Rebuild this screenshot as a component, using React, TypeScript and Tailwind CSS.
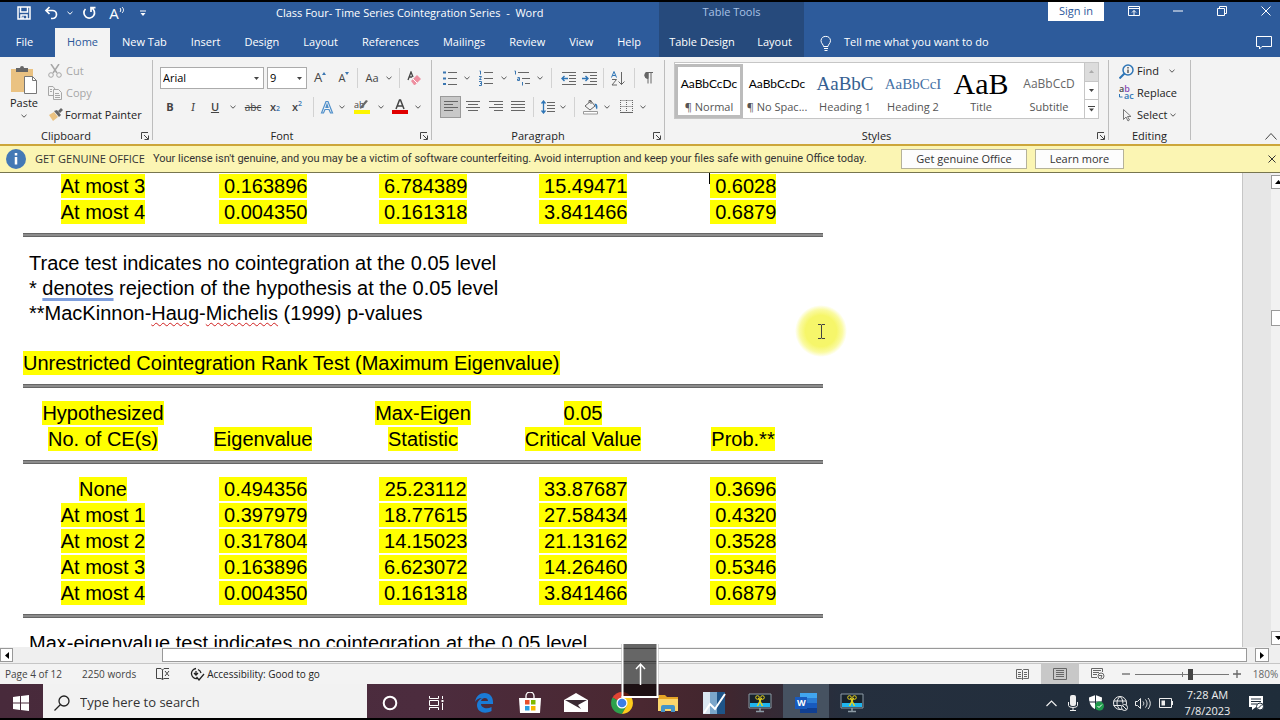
import { FC, ReactNode } from "react";
import clsx from "clsx";

type IconProps = {
  w?: number;
  h?: number;
  className?: string;
  children: ReactNode;
};

const Icon: FC<IconProps> = ({ w = 16, h = 16, className, children }) => (
  <svg
    width={w}
    height={h}
    viewBox={`0 0 ${w} ${h}`}
    fill="none"
    stroke="currentColor"
    className={clsx("shrink-0", className)}
    aria-hidden="true"
  >
    {children}
  </svg>
);

type ToolProps = {
  label: string;
  className?: string;
  children: ReactNode;
};

const Tool: FC<ToolProps> = ({ label, className, children }) => (
  <button
    type="button"
    aria-label={label}
    className={clsx("flex shrink-0 items-center justify-center", className)}
  >
    {children}
  </button>
);

const Chevron = () => (
  <Icon w={6} h={4}>
    <path d="M.5.8 3 3.2 5.5.8" />
  </Icon>
);

const Drop: FC<{ label: string; className: string }> = ({
  label,
  className,
}) => (
  <Tool label={label} className={clsx("h-full text-[#555]", className)}>
    <Chevron />
  </Tool>
);

const Triangle = () => (
  <Icon w={5} h={3}>
    <path d="M0 0h5L2.5 3z" fill="#444" stroke="none" />
  </Icon>
);

const Divider: FC<{ className: string }> = ({ className }) => (
  <div className={clsx("flex h-5 shrink-0 justify-center", className)}>
    <div className="w-px bg-[#d2d2d2]" />
  </div>
);

const tabs = [
  "New Tab",
  "Insert",
  "Design",
  "Layout",
  "References",
  "Mailings",
  "Review",
  "View",
  "Help",
];

const TitleBar = () => (
  <header className="flex h-[55px] shrink-0 bg-[#2d5b9b] text-white">
    <div className="flex w-[659px] shrink-0 flex-col">
      <div className="flex h-[26px] items-center pb-1">
        <Tool label="Save" className="ml-3 w-6">
          <Icon w={14} h={14}>
            <path d="M1 1h12v12H1zM3.5 1v5h7V1M4 13V9h6v4M6 10.500v2" strokeWidth="1.500" />
          </Icon>
        </Tool>
        <Tool label="Undo" className="w-[30px]">
          <Icon w={15} h={14}>
            <path d="M5.500 1 2 4.500 5.500 8M2 4.500h6.500a4 4 0 0 1 0 8H7" strokeWidth="1.700" />
          </Icon>
        </Tool>
        <Tool label="Undo history" className="w-2">
          <Chevron />
        </Tool>
        <Tool label="Redo" className="w-[30px]">
          <Icon w={14} h={14}>
            <path d="M9.500 2A5.300 5.300 0 1 1 3.500 3M9 6V1.700h4.500" strokeWidth="1.700" />
          </Icon>
        </Tool>
        <Tool label="Read aloud" className="w-[26px]">
          <span className="text-[15px] leading-4">A</span>
          <Icon w={6} h={14}>
            <path d="M1 2c1 1 1 3 0 4M3 1c2 2 2 4 0 6" />
          </Icon>
        </Tool>
        <Tool label="Customize toolbar" className="w-[26px]">
          <Icon w={6} h={7}>
            <path d="M0 1h6" />
            <path d="M.5 3h5L3 6z" fill="currentColor" stroke="none" />
          </Icon>
        </Tool>
        <h1 className="ml-[120px] whitespace-pre text-[11px]">
          {"Class Four- Time Series Cointegration Series  -  Word"}
        </h1>
      </div>
      <nav className="flex h-[29px] text-[11px]">
        <button type="button" className="w-[55px] pr-1.5">
          File
        </button>
        <button type="button" className="w-[55px] bg-[#f3f3f3] text-[#2b579a]">
          Home
        </button>
        {tabs.map((tab) => (
          <button key={tab} type="button" className="px-3 whitespace-nowrap">
            {tab}
          </button>
        ))}
      </nav>
    </div>
    <div className="flex w-[145px] shrink-0 flex-col bg-[#264a7c]">
      <div className="flex h-[26px] items-center justify-center pb-1.5 text-[11px] text-[#a9c2e6]">
        Table Tools
      </div>
      <div className="flex h-[29px] text-[11px]">
        <button type="button" className="w-[86px]">
          Table Design
        </button>
        <button type="button" className="flex-1">
          Layout
        </button>
      </div>
    </div>
    <div className="flex min-w-0 flex-1 flex-col">
      <div className="flex h-[26px] items-start justify-end">
        <button
          type="button"
          className="h-[19px] w-14 bg-white text-[11px] text-[#2b579a]"
        >
          Sign in
        </button>
        <Tool label="Ribbon display options" className="ml-2 h-[18px] w-11">
          <Icon w={12} h={10}>
            <path d="M.5.5h11v9H.5zM.5 2.500h11M6 9V4.500M4 6.500l2-2 2 2" />
          </Icon>
        </Tool>
        <Tool label="Minimize" className="h-[18px] w-11">
          <Icon w={10} h={2}>
            <path d="M0 1h10" />
          </Icon>
        </Tool>
        <Tool label="Restore" className="h-[18px] w-[43px]">
          <Icon w={10} h={10}>
            <path d="M.5 2.500h7v7h-7zM2.500 2V.5h7v7H8" />
          </Icon>
        </Tool>
        <Tool label="Close" className="h-[18px] w-[37px] pl-2">
          <Icon w={10} h={10}>
            <path d="m.5.5 9 9m0-9-9 9" />
          </Icon>
        </Tool>
      </div>
      <div className="flex h-[29px] items-center pr-2 pl-4">
        <Icon w={12} h={16}>
          <path d="M3.500 11.500C3.500 9.500 1 8.500 1 5.500a4.800 4.800 0 0 1 9.500 0c0 3-2.500 4-2.500 6zM4 13.500h4M4.500 15.500h3" />
        </Icon>
        <button type="button" className="ml-3 text-[11px]">
          Tell me what you want to do
        </button>
        <Tool label="Comments" className="ml-auto">
          <Icon w={16} h={14}>
            <path d="M.5.500h15v10H6L3.500 13v-2.500h-3z" />
          </Icon>
        </Tool>
      </div>
    </div>
  </header>
);

type GroupProps = {
  label: string;
  className: string;
  launcher?: boolean;
  children: ReactNode;
};

const Group: FC<GroupProps> = ({
  label,
  className,
  launcher = true,
  children,
}) => (
  <>
    <section className={clsx("flex shrink-0 flex-col", className)}>
      {children}
      <div className="mt-auto flex h-4 items-center">
        <span className="flex-1 text-center">{label}</span>
        {launcher && (
          <Tool label={`${label} settings`} className="w-5 pl-1.5">
            <Icon w={8} h={8} className="text-[#444]">
              <path d="M.5 7V.500H7M3 3l4 4M7.500 3.500v4h-4" />
            </Icon>
          </Tool>
        )}
      </div>
    </section>
    <div className="mt-[3px] mb-1 w-px shrink-0 bg-[#bdbdbd]" />
  </>
);

const ClipboardGroup = () => (
  <Group label="Clipboard" className="w-[152px]">
    <div className="flex">
      <button
        type="button"
        className="flex w-12 flex-col items-center pt-2"
      >
        <Icon w={28} h={30}>
          <path d="M1 4h22v23H1z" fill="#eac282" stroke="none" />
          <path d="M6 3h4a2 2 0 0 1 4 0h4v4H6z" fill="#666" stroke="none" />
          <path d="M14.500 11.500h8l4 4v13h-12z" fill="#fff" stroke="#777" />
          <path d="M22.500 11.500v4h4" stroke="#777" />
        </Icon>
        <span>Paste</span>
        <span className="mt-0.5 text-[#555]">
          <Chevron />
        </span>
      </button>
      <div className="flex flex-col pt-[3px]">
        <button
          type="button"
          className="flex h-[22px] items-center gap-1 text-[#a6a6a6]"
        >
          <Icon w={14} h={14}>
            <path d="m3 0 6 9M11 0 5 9" strokeWidth="1.500" />
            <circle cx="3" cy="11" r="2.300" />
            <circle cx="11" cy="11" r="2.300" />
          </Icon>
          Cut
        </button>
        <button
          type="button"
          className="flex h-[22px] items-center gap-1 text-[#a6a6a6]"
        >
          <Icon w={14} h={14}>
            <path d="M5 9.500H.5v-9H5L7 3M2 3.500h2M2 5.500h2M5.500 3.500h5l3 3v7h-8zM7 7.500h4M7 9.500h5M7 11.500h5" />
          </Icon>
          Copy
        </button>
        <button type="button" className="flex h-[22px] items-center gap-0.5">
          <Icon w={15} h={14}>
            <path d="m1 7 5-3 4 5-5 4z" fill="#eac282" stroke="none" />
            <path d="m6 3 3-1 4 5-2 2zM10 3l3-3 2 2-3 3z" fill="#666" stroke="none" />
          </Icon>
          Format Painter
        </button>
      </div>
    </div>
  </Group>
);

const FontGroup = () => (
  <Group label="Font" className="w-[278px]">
    <div className="flex h-8 items-center pt-2.5 pl-[7px] text-[#444]">
      <div className="flex h-[22px] w-[104px] items-center border border-[#ababab] bg-white pr-1">
        <select
          aria-label="Font family"
          className="flex-1 appearance-none pl-0.5 text-black outline-none"
        >
          <option>Arial</option>
        </select>
        <Triangle />
      </div>
      <div className="ml-[3px] flex h-[22px] w-10 items-center border border-[#ababab] bg-white pr-1">
        <select
          aria-label="Font size"
          className="min-w-0 flex-1 appearance-none pl-0.5 text-black outline-none"
        >
          <option>9</option>
        </select>
        <Triangle />
      </div>
      <Tool label="Grow font" className="w-[26px]">
        <span className="text-[13px]">A</span>
        <Icon w={4} h={12}>
          <path d="M0 3h4L2 0z" fill="#3a76b1" stroke="none" />
        </Icon>
      </Tool>
      <Tool label="Shrink font" className="w-[22px]">
        <span>A</span>
        <Icon w={4} h={12}>
          <path d="M0 0h4L2 3z" fill="#3a76b1" stroke="none" />
        </Icon>
      </Tool>
      <Divider className="w-1" />
      <Tool label="Change case" className="w-[22px] pl-1">
        <span>Aa</span>
      </Tool>
      <Drop label="Change case options" className="w-4" />
      <Divider className="w-1" />
      <Tool label="Clear formatting" className="w-[26px]">
        <Icon w={14} h={15}>
          <path d="m1 9 3-8 2 5M2 6h3" strokeWidth="1.300" />
          <path d="m4 10 6-6 4 4-6 6H7z" fill="#ee8fa0" stroke="none" />
          <path d="m6 8 4 4" stroke="#fff" />
        </Icon>
      </Tool>
    </div>
    <div className="mt-[7px] flex h-[22px] items-center pl-[7px] text-[#444]">
      <Tool label="Bold" className="w-5 font-bold">
        B
      </Tool>
      <Tool label="Italic" className="w-[26px] font-serif text-xs italic">
        I
      </Tool>
      <Tool label="Underline" className="w-[18px] font-semibold underline">
        U
      </Tool>
      <Drop label="Underline style" className="w-[18px]" />
      <Tool label="Strikethrough" className="w-[22px] text-[10px] line-through">
        abc
      </Tool>
      <Tool label="Subscript" className="w-[22px] font-semibold">
        x<sub className="text-[7px] text-[#3a76b1]">2</sub>
      </Tool>
      <Tool label="Superscript" className="w-[22px] font-semibold">
        x<sup className="text-[7px] text-[#3a76b1]">2</sup>
      </Tool>
      <Divider className="w-2.5" />
      <Tool label="Text effects" className="w-[18px]">
        <Icon w={14} h={14}>
          <path d="M1.500 13 6 1.500h2L12.500 13h-2L9 9.500H5L3.500 13zM6 7.500h2L7 4.500z" stroke="#4f8fca" strokeWidth="1.200" />
        </Icon>
      </Tool>
      <Drop label="Text effects options" className="w-3" />
      <Tool label="Text highlight color" className="w-7">
        <Icon w={16} h={16}>
          <text x="0" y="9" fontSize="9" fill="#444" stroke="none">
            ab
          </text>
          <path d="m14 2-6 7-2 1 1-3 5-6z" fill="#666" stroke="none" />
          <path d="M0 11h16v4H0z" fill="#fdf500" stroke="none" />
        </Icon>
      </Tool>
      <Drop label="Highlight colors" className="w-2.5" />
      <Tool label="Font color" className="w-7">
        <Icon w={16} h={16}>
          <path d="M4 10 7.500 1h1L12 10M5.500 7h5" strokeWidth="1.500" />
          <path d="M0 11h16v4H0z" fill="#e00000" stroke="none" />
        </Icon>
      </Tool>
      <Drop label="Font colors" className="w-2" />
    </div>
  </Group>
);

const ParagraphGroup = () => (
  <Group label="Paragraph" className="w-[232px]">
    <div className="flex h-8 items-center pt-2.5 pl-1.5 text-[#666]">
      <Tool label="Bullets" className="w-6">
        <Icon w={14} h={14}>
          <path d="M5 1.500h9M5 7.500h9M5 13.500h9" />
          <path d="M0 .5h3v2H0zM0 6.500h3v2H0zM0 12h3v2H0z" fill="#3a76b1" stroke="none" />
        </Icon>
      </Tool>
      <Drop label="Bullet library" className="w-2.5" />
      <Tool label="Numbering" className="w-7">
        <Icon w={14} h={16}>
          <path d="M5 2.500h9M5 8.500h9M5 13.500h9" />
          <path d="M.5 1h1v3.500M0 6.500h2.500L.5 9.500h2M0 11.500h2.500v4H0M1 13.500h1.500" stroke="#3a76b1" />
        </Icon>
      </Tool>
      <Drop label="Numbering library" className="w-2" />
      <Tool label="Multilevel list" className="w-7">
        <Icon w={16} h={16}>
          <path d="M4 2.500h11M8 8.500h8M11 13.500h5" />
          <path d="M.5 1h1v3.500M3.500 7.500h2v3h-2v-1.500h2M8.500 12v3.500" stroke="#3a76b1" />
        </Icon>
      </Tool>
      <Drop label="List library" className="w-2" />
      <Divider className="w-3.5" />
      <Tool label="Decrease indent" className="w-5">
        <Icon w={15} h={13}>
          <path d="M1 .5h14M8 3.500h7M8 6.500h7M8 9.500h7M1 12.500h14" />
          <path d="M7 6.500H1M3.500 4 1 6.500 3.500 9" stroke="#2e75b6" strokeWidth="1.400" />
        </Icon>
      </Tool>
      <Tool label="Increase indent" className="w-[22px]">
        <Icon w={15} h={13}>
          <path d="M1 .5h14M8 3.500h7M8 6.500h7M8 9.500h7M1 12.500h14" />
          <path d="M0 6.500h6M3.500 4 6 6.500 3.500 9" stroke="#2e75b6" strokeWidth="1.400" />
        </Icon>
      </Tool>
      <Divider className="w-1.5" />
      <Tool label="Sort" className="w-6">
        <Icon w={14} h={15}>
          <path d="m.5 6.500 2.500-6 2.500 6M1.500 4.500h3" stroke="#2e75b6" />
          <path d="M1 8.500h4.500l-4.500 5.500h5M10.500 1v12.500M7.500 10.500l3 3 3-3" />
        </Icon>
      </Tool>
      <Divider className="w-2" />
      <Tool label="Show formatting marks" className="w-5">
        <Icon w={10} h={12}>
          <path d="M5 .5v11M8 .5v11M4 .500h6" />
          <path d="M5 0a3 3 0 0 0 0 6.500z" fill="currentColor" />
        </Icon>
      </Tool>
    </div>
    <div className="mt-[7px] flex h-[22px] items-center pl-2 text-[#666]">
      <Tool
        label="Align left"
        className="h-[22px] w-[21px] border border-[#9a9a9a] bg-[#c8c8c8]"
      >
        <Icon w={14} h={12}>
          <path d="M0 .5h14M0 3.500h9M0 6.500h14M0 9.500h9" />
        </Icon>
      </Tool>
      <Tool label="Center" className="w-6">
        <Icon w={14} h={12}>
          <path d="M0 .5h14M2 3.500h10M0 6.500h14M2 9.500h10" />
        </Icon>
      </Tool>
      <Tool label="Align right" className="w-[22px]">
        <Icon w={14} h={12}>
          <path d="M0 .5h14M5 3.500h9M0 6.500h14M5 9.500h9" />
        </Icon>
      </Tool>
      <Tool label="Justify" className="w-[22px]">
        <Icon w={14} h={12}>
          <path d="M0 .5h14M0 3.500h14M0 6.500h14M0 9.500h14" />
        </Icon>
      </Tool>
      <Divider className="w-2" />
      <Tool label="Line spacing" className="w-[22px]">
        <Icon w={14} h={14}>
          <path d="M6 2.500h8M6 5.500h8M6 8.500h8M6 11.500h8" />
          <path d="M2.500 1v12M.5 3.500 2.500 1l2 2.500M.5 10.500l2 2.500 2-2.500" stroke="#2e75b6" strokeWidth="1.300" />
        </Icon>
      </Tool>
      <Drop label="Line spacing options" className="w-2" />
      <Divider className="w-3.5" />
      <Tool label="Shading" className="w-5">
        <Icon w={16} h={16}>
          <path d="m2 7 6-5 4 5-5 4zM6 4V1.500h2V5" />
          <path d="M11.500 4.500c3 0 3.500 3 2.500 6-1.500-1-1-3-2.500-6z" fill="#2e75b6" stroke="none" />
          <path d="M.5 12.500h14v2.500H.5z" fill="#fff" stroke="#999" />
        </Icon>
      </Tool>
      <Drop label="Shading colors" className="w-3" />
      <Tool label="Borders" className="w-[26px]">
        <Icon w={13} h={14}>
          <path d="M.5.5h12M.5 6.500h12M.5 0v12M6.500 0v12M12.500 0v12" strokeDasharray="1 1" />
          <path d="M0 12.500h13" />
        </Icon>
      </Tool>
      <Drop label="Border styles" className="w-2" />
    </div>
  </Group>
);

const wordStyles = [
  {
    name: "¶ Normal",
    sample: "AaBbCcDc",
    font: "font-['Lato',sans-serif] text-xs text-black",
  },
  {
    name: "¶ No Spac...",
    sample: "AaBbCcDc",
    font: "font-['Lato',sans-serif] text-xs text-black",
  },
  {
    name: "Heading 1",
    sample: "AaBbC",
    font: "font-['Liberation_Serif',serif] text-[19px] text-[#365f91]",
  },
  {
    name: "Heading 2",
    sample: "AaBbCcI",
    font: "font-['Liberation_Serif',serif] text-[15px] text-[#4571a5]",
  },
  {
    name: "Title",
    sample: "AaB",
    font: "font-['Liberation_Serif',serif] text-3xl leading-6 text-black",
  },
  {
    name: "Subtitle",
    sample: "AaBbCcD",
    font: "font-['Open_Sans',sans-serif] text-xs text-[#666]",
  },
];

const StylesGroup = () => (
  <Group label="Styles" className="w-[443px]">
    <div className="mt-[5px] ml-[9px] flex h-[57px] w-[425px] border border-[#c6c6c6] bg-white">
      {wordStyles.map(({ name, sample, font }, i) => (
        <button
          key={name}
          type="button"
          className={clsx(
            "mt-px flex h-[54px] w-[68px] shrink-0 flex-col items-center overflow-hidden border-[3px]",
            i === 0 ? "border-[#bcbcbc]" : "border-transparent"
          )}
        >
          <span
            className={clsx(
              "flex h-[30px] w-[58px] items-center justify-center overflow-hidden pt-1 whitespace-nowrap",
              font
            )}
          >
            {sample}
          </span>
          <span className="mt-0.5 whitespace-nowrap text-[#555]">{name}</span>
        </button>
      ))}
      <div className="ml-auto flex w-[14px] flex-col divide-y divide-[#c6c6c6] border-l border-[#c6c6c6]">
        <Tool label="Previous styles" className="flex-1 bg-[#dcdcdc]">
          <Icon w={5} h={3}>
            <path d="M0 3h5L2.500 0z" fill="#aaa" stroke="none" />
          </Icon>
        </Tool>
        <Tool label="Next styles" className="flex-1">
          <Triangle />
        </Tool>
        <Tool label="More styles" className="flex-1">
          <Icon w={7} h={6}>
            <path d="M0 .500h7" stroke="#444" />
            <path d="M1 2.500h5L3.500 5.500z" fill="#444" stroke="none" />
          </Icon>
        </Tool>
      </div>
    </div>
  </Group>
);

const EditingGroup = () => (
  <Group label="Editing" className="w-[81px]" launcher={false}>
    <div className="flex flex-col pt-[3px] pl-2.5">
      <button type="button" className="flex h-[22px] items-center gap-[3px]">
        <Icon w={15} h={15}>
          <circle cx="9" cy="6" r="5" stroke="#2e75b6" strokeWidth="1.500" />
          <path d="m5.500 9.500-5 5" stroke="#2e75b6" strokeWidth="2" />
          <path d="M9 5.500V9M9 3v1.500" stroke="#444" strokeWidth="1.300" />
        </Icon>
        Find
        <span className="ml-[7px] text-[#555]">
          <Chevron />
        </span>
      </button>
      <button type="button" className="flex h-[22px] items-center gap-[3px]">
        <Icon w={15} h={18}>
          <g stroke="none" fontSize="9" fontWeight="600">
            <text x="0" y="8" fill="#444">
              a<tspan fill="#8a4db5">b</tspan>
            </text>
            <text x="5" y="15" fill="#2e75b6">
              ac
            </text>
          </g>
          <path d="M.5 10v3h3" stroke="#2e75b6" />
        </Icon>
        Replace
      </button>
      <button type="button" className="flex h-[22px] items-center gap-[3px]">
        <Icon w={15} h={15}>
          <path d="M4.500 1.500v10l2.500-2.500 2 4 1.500-1-2-3.500h3.500z" stroke="#777" />
        </Icon>
        Select
        <span className="text-[#555]">
          <Chevron />
        </span>
      </button>
    </div>
  </Group>
);

const LicenseBar = () => (
  <div className="flex h-[29px] shrink-0 items-center border-t-2 border-b border-t-[#cca63a] border-b-[#77754f] bg-[#fbf5b3] pr-1 pl-1.5 text-[11px] whitespace-nowrap text-[#333]">
    <Icon w={20} h={20}>
      <circle cx="10" cy="10" r="10" fill="#4479b5" stroke="none" />
      <path d="M10 8v7.500M10 4v2.500" stroke="#fff" strokeWidth="2.500" />
    </Icon>
    <span className="ml-[9px] w-[109px]">GET GENUINE OFFICE</span>
    <span className="ml-[9px] w-[738px] font-['Roboto','Open_Sans',sans-serif]">
      Your license isn't genuine, and you may be a victim of software
      counterfeiting. Avoid interruption and keep your files safe with genuine
      Office today.
    </span>
    <button
      type="button"
      className="ml-2.5 h-5 w-[126px] border border-[#b5b29a] bg-[#fdfdfd]"
    >
      Get genuine Office
    </button>
    <button
      type="button"
      className="ml-2 h-5 w-[89px] border border-[#b5b29a] bg-[#fdfdfd]"
    >
      Learn more
    </button>
    <Tool label="Dismiss message" className="ml-auto">
      <Icon w={8} h={8}>
        <path d="m.5.5 7 7m0-7-7 7" />
      </Icon>
    </Tool>
  </div>
);

const Mark: FC<{ children: ReactNode }> = ({ children }) => (
  <mark className="inline-block bg-[#ffff00] align-top whitespace-pre text-black">
    {children}
  </mark>
);

const Rule: FC<{ className: string }> = ({ className }) => (
  <div
    className={clsx("h-1 border-y border-[#666] bg-[#8c8c8c]", className)}
  />
);

const DataTable: FC<{ label: string; head?: string[][]; rows: string[][] }> = ({
  label,
  head,
  rows,
}) => (
  <table aria-label={label} className="w-full table-fixed text-center leading-6">
    {head && (
      <thead>
        {head.map((cells, i) => (
          <tr key={i}>
            {cells.map((cell, j) => (
              <th key={j} className="px-0 py-px font-normal">
                {cell && <Mark>{cell}</Mark>}
              </th>
            ))}
          </tr>
        ))}
      </thead>
    )}
    <tbody>
      {rows.map((cells) => (
        <tr key={cells[0]}>
          {cells.map((cell, j) => (
            <td key={j} className="px-0 py-px">
              <Mark>{j ? ` ${cell}` : cell}</Mark>
            </td>
          ))}
        </tr>
      ))}
    </tbody>
  </table>
);

const traceRows = [
  ["At most 3", "0.163896", "6.784389", "15.49471", "0.6028"],
  ["At most 4", "0.004350", "0.161318", "3.841466", "0.6879"],
];

const eigenHead = [
  ["Hypothesized", "", "Max-Eigen", "0.05", ""],
  ["No. of CE(s)", "Eigenvalue", "Statistic", "Critical Value", "Prob.**"],
];

const eigenRows = [
  ["None", "0.494356", "25.23112", "33.87687", "0.3696"],
  ["At most 1", "0.397979", "18.77615", "27.58434", "0.4320"],
  ["At most 2", "0.317804", "14.15023", "21.13162", "0.3528"],
  ["At most 3", "0.163896", "6.623072", "14.26460", "0.5346"],
  ["At most 4", "0.004350", "0.161318", "3.841466", "0.6879"],
];

const Document = () => (
  <main className="flex min-h-0 flex-1 overflow-hidden">
    <div className="relative min-w-0 flex-1 overflow-hidden border-r border-[#c6c6c6] bg-white font-['Liberation_Sans',Arial,sans-serif] text-[20px] text-black">
      <article className="ml-[23px] max-w-[800px]">
        <DataTable label="Trace test" rows={traceRows} />
        <Rule className="mt-2" />
        <div className="mt-3.5 pl-1.5 leading-[25px]">
          <p>Trace test indicates no cointegration at the 0.05 level</p>
          <p>
            *{" "}
            <span className="underline decoration-[#7f9fdd] decoration-3 underline-offset-3">
              denotes
            </span>{" "}
            rejection of the hypothesis at the 0.05 level
          </p>
          <p>
            **MacKinnon-
            <span className="underline decoration-[#d02020] decoration-wavy decoration-1 underline-offset-2">
              Haug
            </span>
            -
            <span className="underline decoration-[#d02020] decoration-wavy decoration-1 underline-offset-2">
              Michelis
            </span>{" "}
            (1999) p-values
          </p>
        </div>
        <h2 className="mt-[25px] leading-6">
          <Mark>Unrestricted Cointegration Rank Test (Maximum Eigenvalue)</Mark>
        </h2>
        <Rule className="mt-[9px]" />
        <div className="h-3" />
        <DataTable label="Maximum eigenvalue test" head={eigenHead} rows={[]} />
        <Rule className="mt-2" />
        <div className="h-3" />
        <DataTable label="Maximum eigenvalue results" rows={eigenRows} />
        <Rule className="mt-2" />
        <p className="mt-[13px] pl-1.5 leading-[25px]">
          Max-eigenvalue test indicates no cointegration at the 0.05 level
        </p>
      </article>
      {/* pointer halo */}
      <div className="absolute top-[132px] left-[795px] flex size-[52px] items-center justify-center rounded-full bg-[radial-gradient(closest-side,#f6f66a_60%,#fafaa0_82%,transparent)]">
        <Icon w={7} h={15}>
          <path d="M0 .500h3l.5.5.5-.5h3M3.500 1v13M0 14.500h3l.5-.5.5.5h3" stroke="#444" />
        </Icon>
      </div>
      {/* text caret */}
      <div className="absolute top-0 left-[709px] h-[11px] w-px bg-black" />
    </div>
    <div className="w-7 shrink-0 bg-[#e6e6e6]" />
    <div className="flex w-[9px] shrink-0 flex-col items-start overflow-hidden bg-[#f1f1f1] py-0.5">
      <Tool label="Scroll up" className="h-3.5 w-3.5 border border-[#999] bg-white">
        <Icon w={7} h={4}>
          <path d="M0 4h7L3.500 0z" fill="#000" stroke="none" />
        </Icon>
      </Tool>
      <div className="mt-[121px] h-4 w-3.5 border border-[#999] bg-white" />
      <Tool
        label="Scroll down"
        className="mt-auto h-3.5 w-3.5 border border-[#999] bg-white"
      >
        <Icon w={7} h={4}>
          <path d="M0 0h7L3.500 4z" fill="#000" stroke="none" />
        </Icon>
      </Tool>
    </div>
  </main>
);

const HorizontalScroll = () => (
  <div className="flex h-[17px] shrink-0 items-center border-b border-[#c6c6c6] bg-[#efefef]">
    <Tool label="Scroll left" className="h-3.5 w-[13px] border border-[#999] bg-white">
      <Icon w={4} h={7}>
        <path d="M4 0v7L0 3.500z" fill="#000" stroke="none" />
      </Icon>
    </Tool>
    <div className="mr-2 ml-[149px] h-3.5 flex-1 border border-[#999] bg-white" />
    <Tool label="Scroll right" className="mr-[11px] h-3.5 w-3.5 border border-[#999] bg-white">
      <Icon w={4} h={7}>
        <path d="M0 0v7l4-3.500z" fill="#000" stroke="none" />
      </Icon>
    </Tool>
  </div>
);

const StatusBar = () => (
  <footer className="flex h-5 shrink-0 items-center bg-[#f3f3f3] pl-[5px] text-[10px] whitespace-nowrap text-[#444]">
    <span>Page 4 of 12</span>
    <span className="ml-5">2250 words</span>
    <Tool label="Proofing" className="ml-5">
      <Icon w={14} h={12}>
        <path d="M6.500 2v9.500M6.500 2 5 .5H.5v10H5l1.500 1 1.500-1h5M6.500 2 8 .5h5M9 3l4 5m0-5L9 8" />
      </Icon>
    </Tool>
    <button
      type="button"
      className="ml-5 flex items-center gap-0.5 font-medium text-[#222]"
    >
      <Icon w={15} h={14}>
        <path d="M6 1.500a5 5 0 1 0 1 10M6 4v4M4 6l2 2 2-2M8 2.500a5 5 0 0 1 3 3.500M6.500 10l2.500 3 5-6" strokeWidth="1.300" />
      </Icon>
      Accessibility: Good to go
    </button>
    <div className="ml-auto flex h-full items-center text-[#666]">
      <Tool label="Read mode" className="h-full w-[38px]">
        <Icon w={13} h={11}>
          <path d="M6.500 1.500v9M.5.500h5l1 1 1-1h5v9h-5l-1 1-1-1h-5zM2 3.500h3M2 5.500h3M2 7.500h3M8 3.500h3M8 5.500h3M8 7.500h3" />
        </Icon>
      </Tool>
      <Tool label="Print layout" className="h-full w-[38px] bg-[#c8c8c8]">
        <Icon w={14} h={12}>
          <path d="M.5.500h13v11H.5zM3 2.500h8M3 4.500h8M3 6.500h8M3 8.500h8" />
        </Icon>
      </Tool>
      <Tool label="Web layout" className="h-full w-[38px]">
        <Icon w={14} h={12}>
          <path d="M6 9.500H.5v-9h11V4M2 2.500h8M2 4.500h6M2 6.500h4" />
          <circle cx="10" cy="8" r="3" />
          <path d="M8 7.500h3L10 10" />
        </Icon>
      </Tool>
      <Tool label="Zoom out" className="w-[18px]">
        <Icon w={8} h={8}>
          <path d="M0 4h8" strokeWidth="1.300" />
        </Icon>
      </Tool>
      <input
        type="range"
        aria-label="Zoom"
        defaultValue={60}
        className="h-3 w-[94px] appearance-none bg-[linear-gradient(#777,#777),linear-gradient(#777,#777)] bg-[length:100%_1px,1px_5px] bg-center bg-no-repeat [&::-webkit-slider-thumb]:h-[11px] [&::-webkit-slider-thumb]:w-[5px] [&::-webkit-slider-thumb]:appearance-none [&::-webkit-slider-thumb]:bg-[#444]"
      />
      <Tool label="Zoom in" className="w-4">
        <Icon w={8} h={8}>
          <path d="M0 4h8M4 0v8" strokeWidth="1.300" />
        </Icon>
      </Tool>
      <button type="button" className="w-[35px] pl-1.5 text-center">
        180%
      </button>
    </div>
  </footer>
);

const SnipIcon = () => (
  <Icon w={24} h={20}>
    <path d="M1 1h22v14H1z" fill="#17222c" stroke="#8c9aa5" />
    <path d="M2 10h20v4H2z" fill="#1fb4ee" stroke="none" />
    <path d="m9.500 13 4-8M14.500 13l-4-8" stroke="#e6d21c" strokeWidth="1.500" />
    <circle cx="9.500" cy="4.500" r="1.800" stroke="#e6d21c" />
    <circle cx="14.500" cy="4.500" r="1.800" stroke="#e6d21c" />
    <path d="M12 15v3M8 18.500h8" stroke="#8c9aa5" strokeWidth="1.500" />
  </Icon>
);

const apps: { name: string; active?: boolean; icon: ReactNode }[] = [
  {
    name: "Edge",
    icon: (
      <Icon w={20} h={20}>
        <path
          d="M1 9C2 3 6 0 10.500 0 16 0 19 4 19 9v2H7c0 4 6 5.500 10.500 3v4C11 21.500 3 19.500 3 12c0-3 2-5.500 5-7C4.500 5 2 7 1 9zm6-1h7c0-4-6-4-7 0z"
          fill="#1a7bd6"
          stroke="none"
        />
      </Icon>
    ),
  },
  {
    name: "Store",
    icon: (
      <Icon w={22} h={22}>
        <path d="M7 6V4a4 4 0 0 1 8 0v2" stroke="#fff" strokeWidth="1.300" />
        <path d="M0 6h22l-1 15H1z" fill="#fff" stroke="none" />
        <path d="M6 8h4.500v4.500H6z" fill="#e8502a" stroke="none" />
        <path d="M12 8h4.500v4.500H12z" fill="#7eb900" stroke="none" />
        <path d="M6 14h4.500v4.500H6z" fill="#2b9fe0" stroke="none" />
        <path d="M12 14h4.500v4.500H12z" fill="#f5b800" stroke="none" />
      </Icon>
    ),
  },
  {
    name: "Mail",
    icon: (
      <Icon w={24} h={20}>
        <path d="M0 7 12 0l12 7v12H0z" fill="#fff" stroke="none" />
        <path d="m1 7 22 0-9 5 3 4z" fill="#3a2a33" stroke="none" />
      </Icon>
    ),
  },
  {
    name: "Chrome",
    icon: (
      <Icon w={22} h={22}>
        <g stroke="none">
          <path d="M11 11 1.500 5.500A11 11 0 0 1 20.500 5.500z" fill="#e24434" />
          <path d="M11 11 1.500 5.500A11 11 0 0 0 11 22l5-9z" fill="#2da14c" />
          <path d="M11 22 16 13 11 5.500h9.500A11 11 0 0 1 11 22z" fill="#fccb1d" />
          <circle cx="11" cy="11" r="5.500" fill="#fff" />
          <circle cx="11" cy="11" r="4.300" fill="#3c7de6" />
        </g>
      </Icon>
    ),
  },
  {
    name: "File Explorer",
    icon: (
      <Icon w={20} h={18}>
        <path d="M0 1h7l2 2h11v4H0z" fill="#e5a526" stroke="none" />
        <path d="M0 5h20v12H0z" fill="#fbd66c" stroke="none" />
        <path d="M3 18v-5q0-2 2-2h10q2 0 2 2v5h-4v-3H7v3z" fill="#4494c8" stroke="none" />
      </Icon>
    ),
  },
  {
    name: "Statistics",
    icon: (
      <Icon w={24} h={24}>
        <path d="M1 1h7v22H1z" fill="#dbe7f1" stroke="none" />
        <path d="M8 1h7v22H8z" fill="#7ba6ca" stroke="none" />
        <path d="M15 1h8v22h-8z" fill="#1e5488" stroke="none" />
        <path d="m2 22 6-9 5 5L23 3" stroke="#fff" strokeWidth="2" />
      </Icon>
    ),
  },
  { name: "Screen Recorder", icon: <SnipIcon /> },
  {
    name: "Word",
    active: true,
    icon: (
      <Icon w={24} h={20}>
        <g stroke="none">
          <path d="M6 0h17v5H6z" fill="#41a5ee" />
          <path d="M6 5h17v5H6z" fill="#2b7cd3" />
          <path d="M6 10h17v5H6z" fill="#185abd" />
          <path d="M6 15h17v5H6z" fill="#103f91" />
          <path d="M1 4h12v12H1z" fill="#185abd" />
          <text x="3" y="13" fontSize="9" fontWeight="700" fill="#fff">
            W
          </text>
        </g>
      </Icon>
    ),
  },
  { name: "Screen Recorder 2", icon: <SnipIcon /> },
];

const Taskbar = () => (
  <div className="flex h-[34px] shrink-0 bg-[linear-gradient(90deg,#482a3b_0%,#4c2c3e_33%,#4a2831_50%,#42262e_56%,#252f3e_66%,#1f2d3a_100%)] text-white">
    <Tool label="Start" className="w-[42px] pt-1 pr-1">
      <Icon w={16} h={16} className="ml-1">
        <path
          d="m0 2 7-1v6.500H0zM8 1l8-1v7.500H8zM0 8.500h7V15l-7-1zM8 8.500h8V16l-8-1z"
          fill="#fff"
          stroke="none"
        />
      </Icon>
    </Tool>
    <label className="ml-px flex w-[324px] items-center gap-2.5 bg-[#f2f2f2] pt-1 pl-[11px] text-[#222]">
      <Icon w={16} h={16}>
        <circle cx="10" cy="6" r="5" strokeWidth="1.300" />
        <path d="m6.500 9.500-6 6" strokeWidth="1.300" />
      </Icon>
      <input
        type="text"
        aria-label="Search"
        placeholder="Type here to search"
        className="min-w-0 flex-1 text-[13px] outline-none placeholder:text-[#333]"
      />
    </label>
    <Tool label="Cortana" className="w-[46px] pt-1">
      <Icon w={16} h={16}>
        <circle cx="8" cy="8" r="6.300" strokeWidth="2" />
      </Icon>
    </Tool>
    <Tool label="Task view" className="w-[46px] pt-1">
      <Icon w={15} h={14}>
        <path d="M.5 0v2.500h9V0M.5 4.500h9v5h-9zM.5 14v-2.500h9V14M13.500 0v3M13.500 7v7" />
        <path d="M12.500 4h2v2h-2z" fill="#fff" stroke="none" />
      </Icon>
    </Tool>
    <div className="ml-0.5 flex">
      {apps.map(({ name, active, icon }) => (
        <Tool
          key={name}
          label={name}
          className={clsx("w-[46px] pt-1", active && "bg-[#465261]")}
        >
          {icon}
        </Tool>
      ))}
    </div>
    <div className="ml-auto flex items-center pt-1 text-[#eee]">
      <Tool label="Show hidden icons" className="w-[22px]">
        <Icon w={11} h={7}>
          <path d="m.5 6 5-5 5 5" strokeWidth="1.200" />
        </Icon>
      </Tool>
      <Tool label="Microphone" className="w-[22px]">
        <Icon w={12} h={16}>
          <rect x="3" y="0" width="6" height="11" rx="2" fill="#eee" stroke="none" />
          <path d="M1.500 7v3.500q0 2 4.500 2t4.500-2V7M6 12v3M3 15.500h6" />
        </Icon>
      </Tool>
      <Tool label="Security" className="w-[25px]">
        <Icon w={15} h={16}>
          <path d="M6.500 0 13 2.500c0 6-2 9.500-6.500 12C2 12 0 8.500 0 2.500z" fill="#fff" stroke="none" />
          <path d="M6.500 0v15M0 7h13" stroke="#1f2d3a" />
          <circle cx="10.500" cy="11" r="4.500" fill="#1f9b4c" stroke="none" />
          <path d="m8.500 11 1.500 1.500 3-3" stroke="#fff" />
        </Icon>
      </Tool>
      <Tool label="Network" className="w-[22px]">
        <Icon w={15} h={15}>
          <circle cx="7" cy="7" r="6.500" />
          <path d="M.5 5h13M.5 9.500h8M7 .5C3 4 3 10 7 13.500M7 .5c2.500 2 3 5 2.800 7" />
          <circle cx="11.500" cy="11.500" r="3" fill="#1f2d3a" />
          <path d="m9.500 9.500 4 4" />
        </Icon>
      </Tool>
      <Tool label="Volume" className="w-6">
        <Icon w={16} h={13}>
          <path d="M.5 4.500h2l3-3v10l-3-3h-2zM8 4.500c1 1 1 3 0 4M10.500 2.500c2 2.500 2 5.500 0 8M13 1c3 3.500 3 7.500 0 11" />
        </Icon>
      </Tool>
      <Tool label="Battery" className="w-[22px]">
        <Icon w={15} h={10}>
          <path d="M.5.500h12v9H.5zM13.500 3v4" />
          <path d="M2.500 2.500H6v5H2.500z" fill="#eee" stroke="none" />
        </Icon>
      </Tool>
      <div className="w-[61px] text-center text-[11px] leading-4">
        <div>7:28 AM</div>
        <div>7/8/2023</div>
      </div>
      <Tool label="Notifications" className="mr-1.5 w-9">
        <Icon w={17} h={17}>
          <path d="M1 1h14v11H8l-4 3v-3H1z" fill="#fff" stroke="none" />
          <path d="M3 4h10M3 6.500h10M3 9h6" stroke="#1f2d3a" />
          <circle cx="12" cy="11.500" r="3.500" fill="#fff" stroke="#1f2d3a" />
          <path d="m10 13.500 4-4" stroke="#1f2d3a" />
        </Icon>
      </Tool>
    </div>
  </div>
);

export default function App() {
  return (
    <div className="relative flex h-screen flex-col overflow-hidden border-y-2 border-black bg-[#f3f3f3] font-['Open_Sans','Noto_Sans',sans-serif]">
      <TitleBar />
      <div className="flex h-[87px] shrink-0 text-[11px] text-[#222]">
        <ClipboardGroup />
        <FontGroup />
        <ParagraphGroup />
        <StylesGroup />
        <EditingGroup />
        <Tool label="Collapse ribbon" className="mt-auto mr-[3px] mb-1 ml-auto">
          <Icon w={12} h={7} className="text-[#444]">
            <path d="m.5 6.500 5.500-6 5.500 6" />
          </Icon>
        </Tool>
      </div>
      <LicenseBar />
      <Document />
      <HorizontalScroll />
      <StatusBar />
      <Taskbar />
      {/* last pressed key */}
      <div className="absolute bottom-5 left-1/2 flex h-[54px] w-[37px] -translate-x-1/2 items-center justify-center border-2 border-t-0 border-white bg-black/60 pt-2 text-white">
        <Icon w={12} h={24}>
          <path d="M6 23V2M1.500 7 6 2l4.500 5" strokeWidth="1.500" />
        </Icon>
      </div>
    </div>
  );
}
